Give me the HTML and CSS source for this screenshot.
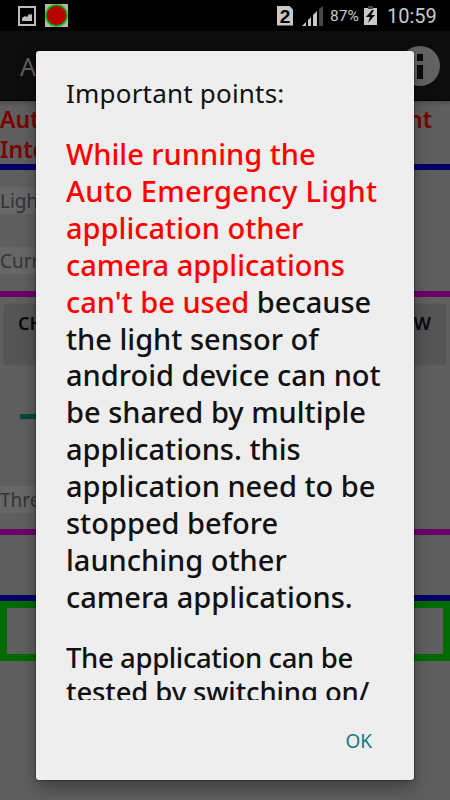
FILE: index.html
```html
<!DOCTYPE html>
<html lang="en">
<head>
  <meta charset="utf-8" />
  <meta name="viewport" content="width=device-width, initial-scale=1.0" />
  <title>Auto Emergency Light</title>

  <link rel="stylesheet" href="styles.css">
</head>
<body>

  <div class="status-bar">
    <svg class="icon-image" viewBox="0 0 18 20">
      <rect x="1" y="1" width="16" height="18" fill="none" stroke="#bdbdbd" stroke-width="2" />
      <path d="M4 15v-3l3-2 2 1 2-3 2 1 1-2v8z" fill="#bdbdbd" />
    </svg>
    <svg class="icon-app" viewBox="0 0 23 23">
      <rect width="23" height="23" fill="#b4b4b4" />
      <circle cx="11.5" cy="11.5" r="10.5" fill="#b90000" stroke="#00b400" stroke-width="1.7" />
    </svg>
    <div class="sim">2</div>
    <svg class="icon-signal" viewBox="0 0 21 20">
      <path d="M0 20l4-4v4zM6 14l3-3v9H6zM11 9l4-4v15h-4z" fill="#c8c8c8" />
      <path d="M17 3l4-3v20h-4z" fill="#484848" />
    </svg>
    <span class="percent">87%</span>
    <svg class="icon-battery" viewBox="0 0 13 19">
      <path d="M0 2h13v17H0z" fill="#c8c8c8" />
      <path d="M4 0h5v3H4z" fill="#484848" />
      <path d="M8 4L2 11h4l-2 6 7-8H7l3-5z" fill="#000" />
    </svg>
    <span class="clock">10:59</span>
  </div>

  <div class="action-bar">
    <span class="title">A</span>
    <svg class="icon-info" viewBox="0 0 40 40">
      <circle cx="20" cy="20" r="20" fill="#626262" />
      <path d="M17 8h6v7h-6zM17 19h6v14h-6z" fill="#0a0a0a" />
    </svg>
  </div>

  <div class="page">
    <div class="heading"><span>Aut<br>Inte</span><span>ht</span></div>
    <div class="line blue"></div>
    <div class="readings">
      <div class="label">Ligh</div>
      <div class="label">Curr</div>
    </div>
    <div class="line purple"></div>
    <div class="controls">
      <div class="check-button"><span>CH</span><span>W</span></div>
      <div class="seek"></div>
      <div class="label">Thre</div>
    </div>
    <div class="line purple"></div>
    <div class="space"></div>
    <div class="line blue"></div>
    <div class="result"></div>
  </div>

  <div class="dialog">
    <div class="message">
      <p class="intro">Important points:</p>
      <p class="big"><span class="red">While running the<br><span class="wide">Auto Emergency Light</span><br>application other<br>camera applications<br>can't be used</span> because<br>the light sensor of<br>android device can not<br>be shared by multiple<br>applications. this<br>application need to be<br>stopped before<br>launching other<br>camera applications.</p>
      <p class="next">The application can be<br><span class="wide">tested by switching on/</span></p>
    </div>
    <div class="buttons"><span class="ok">OK</span></div>
  </div>

</body>
</html>
```
FILE: styles.css
```css
* {
  box-sizing: border-box;
}

body {
  margin: 0;
  width: 450px;
  height: 800px;
  position: relative;
  overflow: hidden;
  font-family: "Noto Sans", sans-serif;
  background: #5f5f5f;
}

.status-bar {
  height: 31px;
  background: #000;
  color: #c8c8c8;
  display: flex;
  align-items: center;
  padding: 0 14px 0 18px;
}

.icon-image {
  width: 18px;
  height: 20px;
}

.icon-app {
  width: 23px;
  height: 23px;
  margin-left: 9px;
}

.sim {
  width: 16px;
  height: 20px;
  margin-left: auto;
  background: #c8c8c8;
  color: #000;
  clip-path: polygon(0 0, 12px 0, 100% 4px, 100% 100%, 0 100%);
  font: bold 19px/21px "Liberation Sans", sans-serif;
  text-align: center;
}

.icon-signal {
  width: 21px;
  height: 20px;
  margin-left: 9px;
}

.percent {
  width: 30px;
  margin-left: 7px;
  font: 15.5px/20px Roboto, sans-serif;
}

.icon-battery {
  width: 13px;
  height: 19px;
  margin-left: 4px;
}

.clock {
  width: 49px;
  margin-left: 10px;
  font: 20px/24px Roboto, sans-serif;
  white-space: nowrap;
}

.action-bar {
  height: 70px;
  background: #0d0d0d;
  color: #616161;
  display: flex;
  align-items: center;
  justify-content: space-between;
  padding: 0 10px 0 20px;
  border-bottom: 1px solid #000;
}

.title {
  font-size: 25px;
}

.icon-info {
  width: 40px;
  height: 40px;
}

.page {
  height: 699px;
  background: linear-gradient(#505050, #5f5f5f 6px);
}

.heading {
  height: 63px;
  display: flex;
  justify-content: space-between;
  padding: 3px 18px 0 0;
  color: #7c0000;
  font-size: 23px;
  font-weight: 600;
  line-height: 30px;
}

.line {
  height: 6px;
}

.blue {
  background: #000068;
}

.purple {
  background: #6b006b;
}

.readings {
  height: 121px;
  display: flex;
  flex-direction: column;
  gap: 33px;
  padding-top: 17px;
}

.label {
  height: 27px;
  width: 150px;
  background: #676767;
  color: #343434;
  font-size: 19px;
  line-height: 29px;
}

.controls {
  height: 232px;
  padding-top: 7px;
}

.check-button {
  display: flex;
  justify-content: space-between;
  height: 61px;
  margin: 0 4px;
  padding: 7px 15px 0 14px;
  border-radius: 4px;
  background: #555;
  box-shadow: 0 0 1px #444;
  color: #080808;
  font-size: 18px;
  font-weight: 600;
  line-height: 24px;
}

.seek {
  width: 120px;
  height: 5px;
  margin: 49px 20px 67px;
  background: #00483f;
}

.space {
  height: 60px;
}

.result {
  height: 60px;
  border: 7px solid #006b00;
}

/* dialog over the dimmed page */
.dialog {
  position: absolute;
  left: 36px;
  top: 51px;
  width: 378px;
  height: 729px;
  padding: 23px 30px 0;
  border-radius: 3px;
  background: #eee;
  box-shadow: 0 0 2px rgba(0,0,0,0.8), 0 8px 18px rgba(0,0,0,0.35);
  color: #111;
}

.message {
  height: 626px;
  overflow: hidden;
  white-space: nowrap;
}

.message p {
  margin: 0;
}

.intro {
  font-size: 26px;
  line-height: 39px;
  letter-spacing: 0.2px;
}

.message .big {
  margin-top: 23px;
  font-size: 29px;
  font-weight: 500;
  line-height: 36.9px;
}

.big .wide {
  letter-spacing: 0.25px;
}

.red {
  color: #f00;
}

.message .next {
  margin-top: 25px;
  font-size: 27.5px;
  font-weight: 500;
  line-height: 34px;
  letter-spacing: -0.38px;
}

.next .wide {
  letter-spacing: -0.13px;
}

.buttons {
  display: flex;
  justify-content: flex-end;
  padding: 28px 12px 0 0;
}

.ok {
  color: #187785;
  font-size: 19px;
  line-height: 27px;
}
```
